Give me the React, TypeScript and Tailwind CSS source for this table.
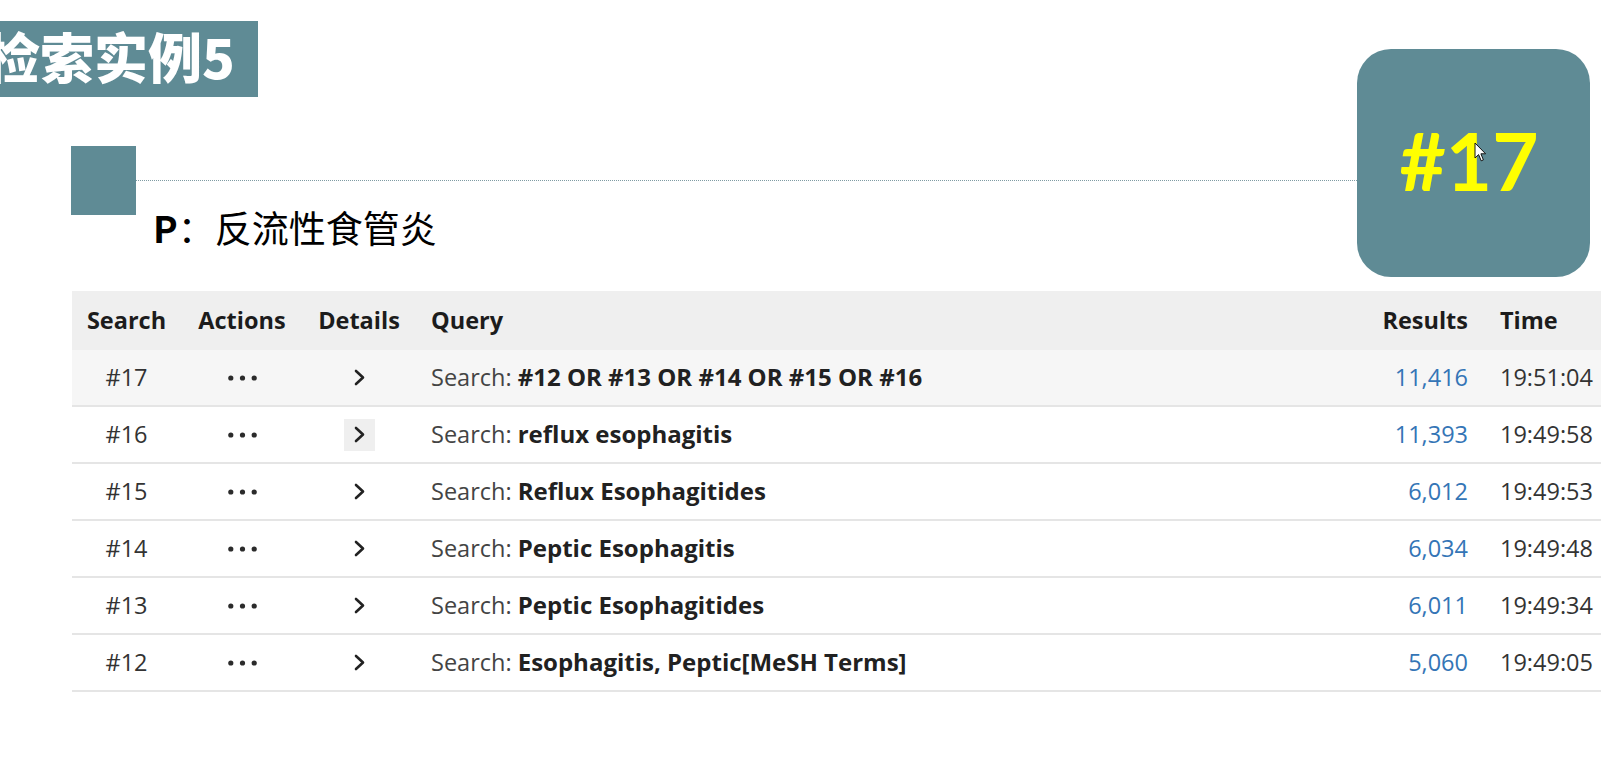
import React from 'react';

type Row = { id: string; query: string; results: string; time: string; hover?: boolean; active?: boolean };

const rows: Row[] = [
  { id: '#17', query: '#12 OR #13 OR #14 OR #15 OR #16', results: '11,416', time: '19:51:04', active: true },
  { id: '#16', query: 'reflux esophagitis', results: '11,393', time: '19:49:58', hover: true },
  { id: '#15', query: 'Reflux Esophagitides', results: '6,012', time: '19:49:53' },
  { id: '#14', query: 'Peptic Esophagitis', results: '6,034', time: '19:49:48' },
  { id: '#13', query: 'Peptic Esophagitides', results: '6,011', time: '19:49:34' },
  { id: '#12', query: 'Esophagitis, Peptic[MeSH Terms]', results: '5,060', time: '19:49:05' },
];

const cols = 'grid grid-cols-[109px_122px_112px_954px_115px_136px] items-center';

const Dots = () => (
  <svg width="29" height="6" viewBox="0 0 29 6">
    <circle cx="2.8" cy="3" r="2.6" fill="#2b2b2b" />
    <circle cx="14.5" cy="3" r="2.6" fill="#2b2b2b" />
    <circle cx="26.2" cy="3" r="2.6" fill="#2b2b2b" />
  </svg>
);

const Chevron = () => (
  <svg width="11" height="17" viewBox="0 0 11 17">
    <polyline points="2,2 9,8.5 2,15" fill="none" stroke="#222" strokeWidth="2.6" strokeLinecap="round" strokeLinejoin="round" />
  </svg>
);

const App: React.FC = () => {
  return (
    <div className="relative w-[1601px] h-[765px] overflow-hidden bg-white">
      {/* title banner */}
      <div className="pt-[21px]">
        <div className="w-[258px] h-[76px] bg-[#5f8b95] flex items-center overflow-hidden">
          <span className="-ml-[14px] -mt-[6px] text-[54px] font-black text-white leading-none whitespace-nowrap font-['Noto_Sans_CJK_SC',sans-serif]">
            检索实例5
          </span>
        </div>
      </div>

      {/* square + dotted rule */}
      <div className="mt-[49px] flex items-center pl-[71px] pr-[244px]">
        <div className="w-[65px] h-[69px] bg-[#5f8b95]" />
        <div className="flex-1 border-t border-dotted border-[#7f9ba3]" />
      </div>

      <div className="-mt-[10px] pl-[153px] h-[44px] flex items-center text-[37px] leading-[44px] text-black font-['Noto_Sans_CJK_SC',sans-serif]">
        <span className="font-bold">P</span>
        <span>：反流性食管炎</span>
      </div>

      {/* history table */}
      <div className="mt-[42px] ml-[72px] w-[1548px] font-['Open_Sans',sans-serif] text-[23.5px]">
        <div className={`${cols} h-[59px] bg-[#efefef] font-bold text-[#1c1c1c]`}>
          <div className="text-center">Search</div>
          <div className="text-center">Actions</div>
          <div className="text-center">Details</div>
          <div className="pl-4">Query</div>
          <div className="text-right pr-4">Results</div>
          <div className="pl-4">Time</div>
        </div>
        {rows.map((r) => (
          <div
            key={r.id}
            className={`${cols} h-[57px] border-b-2 border-[#e5e5e5] ${r.active ? 'bg-[#f6f6f6]' : 'bg-white'}`}
          >
            <div className="text-center text-[#333]">{r.id}</div>
            <div className="flex justify-center">
              <Dots />
            </div>
            <div className="flex justify-center">
              <div className={`w-[31px] h-[32px] flex items-center justify-center ${r.hover ? 'bg-[#efefef]' : ''}`}>
                <Chevron />
              </div>
            </div>
            <div className="pl-4 whitespace-nowrap text-[#444]">
              Search: <span className="font-bold text-[24px] text-[#212121]">{r.query}</span>
            </div>
            <div className="text-right pr-4 text-[#3475b6]">{r.results}</div>
            <div className="pl-4 text-[#333]">{r.time}</div>
          </div>
        ))}
      </div>

      {/* callout */}
      <div className="absolute left-[1357px] top-[49px] w-[233px] h-[228px] rounded-[34px] bg-[#5f8b95] flex items-center justify-center pr-[9px] pb-[6px]">
        <span className="text-[80px] font-bold leading-none text-[#ffff00] font-['Lato',sans-serif]">#17</span>
      </div>

      {/* mouse pointer */}
      <svg className="absolute left-[1474px] top-[142px]" width="13" height="21" viewBox="0 0 13 21">
        <path d="M1 1 L1 16 L4.6 12.6 L7.2 18.8 L9.4 17.9 L6.9 11.8 L11.6 11.8 Z" fill="#fff" stroke="#111" strokeWidth="1" strokeLinejoin="round" />
      </svg>
    </div>
  );
};

export default App;
